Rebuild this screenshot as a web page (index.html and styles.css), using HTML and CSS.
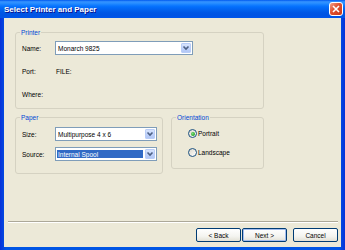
FILE: index.html
```html
<!DOCTYPE html>
<html lang="en">
<head>
    <meta charset="UTF-8">
    <meta name="viewport" content="width=device-width, initial-scale=1.0">
    <title>Select Printer and Paper</title>
    <link rel="stylesheet" href="styles.css">
</head>
<body>
    <div class="window">
        <!-- Title Bar -->
        <div class="titlebar">
            <span class="title">Select Printer and Paper</span>
            <span class="close">
                <svg width="10" height="10" viewBox="0 0 10 10"><path d="M2 2 L8 8 M8 2 L2 8" stroke="#fff" stroke-width="1.6" fill="none"/></svg>
            </span>
        </div>

        <div class="client">
            <!-- Printer -->
            <div class="group printer">
                <span class="group-title">Printer</span>
                <div class="row">
                    <span class="label">Name:</span>
                    <div class="combo combo-wide">
                        <span class="value">Monarch 9825</span>
                        <span class="drop"><svg width="8" height="8" viewBox="0 0 8 8"><path d="M1.5 2.5 L4 5 L6.5 2.5" stroke="#4D6185" stroke-width="1.6" fill="none"/></svg></span>
                    </div>
                </div>
                <div class="row">
                    <span class="label">Port:</span>
                    <span class="info">FILE:</span>
                </div>
                <div class="row">
                    <span class="label">Where:</span>
                </div>
            </div>

            <div class="group-row">
                <!-- Paper -->
                <div class="group paper">
                    <span class="group-title">Paper</span>
                    <div class="row">
                        <span class="label">Size:</span>
                        <div class="combo">
                            <span class="value">Multipurpose 4 x 6</span>
                            <span class="drop"><svg width="8" height="8" viewBox="0 0 8 8"><path d="M1.5 2.5 L4 5 L6.5 2.5" stroke="#4D6185" stroke-width="1.6" fill="none"/></svg></span>
                        </div>
                    </div>
                    <div class="row">
                        <span class="label">Source:</span>
                        <div class="combo">
                            <span class="value selected">Internal Spool</span>
                            <span class="drop"><svg width="8" height="8" viewBox="0 0 8 8"><path d="M1.5 2.5 L4 5 L6.5 2.5" stroke="#4D6185" stroke-width="1.6" fill="none"/></svg></span>
                        </div>
                    </div>
                </div>

                <!-- Orientation -->
                <div class="group orientation">
                    <span class="group-title">Orientation</span>
                    <div class="radio-row">
                        <span class="radio checked"></span>
                        <span>Portrait</span>
                    </div>
                    <div class="radio-row">
                        <span class="radio"></span>
                        <span>Landscape</span>
                    </div>
                </div>
            </div>

            <div class="separator"></div>

            <!-- Buttons -->
            <div class="buttons">
                <button class="btn back">&lt; Back</button>
                <button class="btn default next">Next &gt;</button>
                <button class="btn">Cancel</button>
            </div>
        </div>
    </div>
</body>
</html>
```

FILE: styles.css
```css
* {
    margin: 0;
    padding: 0;
    box-sizing: border-box;
}

body {
    width: 345px;
    height: 250px;
    overflow: hidden;
    font-family: 'Liberation Sans', Arial, sans-serif;
    font-size: 6.5px;
    color: #000;
}

.window {
    width: 345px;
    height: 250px;
    display: flex;
    flex-direction: column;
    background: linear-gradient(to right, #0831D9, #0055E5 6px, #0055E5 calc(100% - 6px), #0831D9);
}

/* Title Bar */
.titlebar {
    height: 18px;
    display: flex;
    align-items: center;
    justify-content: space-between;
    padding: 0 2px 0 4px;
    background: linear-gradient(to bottom, #0058EE 0%, #3593FF 10%, #288EFF 18%, #127DFF 28%, #036FFC 38%, #0262EE 55%, #0057E5 70%, #0054E3 85%, #0055EB 100%);
}

.title {
    color: #fff;
    font-weight: bold;
    font-size: 8px;
    text-shadow: 1px 1px #0F1089;
}

.close {
    width: 14px;
    height: 14px;
    border: 1px solid #fff;
    border-radius: 3px;
    background: linear-gradient(135deg, #F0A08A, #E0502E 45%, #C8381A);
    display: flex;
    align-items: center;
    justify-content: center;
}

/* Client area */
.client {
    flex: 1;
    margin: 0 4px 3px 4px;
    background-color: #ECE9D8;
    display: flex;
    flex-direction: column;
    padding: 14px 0 5px 0;
}

.group {
    position: relative;
    border: 1px solid #D5D2C2;
    border-radius: 3px;
}

.group-title {
    position: absolute;
    top: -5px;
    left: 4px;
    padding: 0 1px;
    line-height: 9px;
    background-color: #ECE9D8;
    color: #0046D5;
}

.printer {
    width: 249px;
    height: 77px;
    margin-left: 11px;
    padding: 8px 0 0 6px;
}

.row {
    display: flex;
    align-items: center;
    height: 14px;
    margin-bottom: 9px;
}

.label {
    width: 33px;
}

.info {
    padding-left: 1px;
}

.group-row {
    display: flex;
    align-items: flex-start;
    gap: 8px;
    margin-top: 8px;
    margin-left: 11px;
}

.paper {
    width: 148px;
    height: 57px;
    padding: 9px 0 0 6px;
}

.paper .row {
    margin-bottom: 6px;
}

.orientation {
    width: 93px;
    height: 52px;
    padding: 11px 0 0 16px;
}

/* Combo boxes */
.combo {
    width: 102px;
    height: 14px;
    border: 1px solid #7F9DB9;
    background-color: #fff;
    display: flex;
    align-items: stretch;
    padding: 1px;
}

.combo-wide {
    width: 138px;
}

.value {
    flex: 1;
    display: flex;
    align-items: center;
    padding-left: 1px;
    margin-right: 1px;
}

.value.selected {
    background-color: #316AC5;
    color: #fff;
    margin: 1px 2px 1px 0;
}

.drop {
    width: 10px;
    border: 1px solid #B9CDF7;
    border-radius: 1px;
    background: linear-gradient(to bottom, #D8E4FC, #C1D3FB 50%, #B2C7F5);
    display: flex;
    align-items: center;
    justify-content: center;
}

/* Radio buttons */
.radio-row {
    display: flex;
    align-items: center;
    gap: 1px;
    height: 9px;
    margin-bottom: 10px;
}

.radio {
    width: 9px;
    height: 9px;
    border: 1px solid #1C5180;
    border-radius: 50%;
    background: linear-gradient(135deg, #DCD8CB, #fff);
    display: flex;
    align-items: center;
    justify-content: center;
}

.radio.checked::after {
    content: '';
    width: 4px;
    height: 4px;
    border-radius: 50%;
    background: radial-gradient(circle at 40% 40%, #7EE07E, #21A121 70%);
}

.separator {
    margin: auto 3px 0 4px;
    height: 2px;
    border-top: 1px solid #ACA899;
    border-bottom: 1px solid #fff;
}

/* Buttons */
.buttons {
    display: flex;
    justify-content: flex-end;
    margin-top: 5px;
    padding-right: 3px;
}

.btn {
    width: 45px;
    height: 14px;
    font-family: 'Liberation Sans', Arial, sans-serif;
    font-size: 6.5px;
    color: #000;
    border: 1px solid #003C74;
    border-radius: 2px;
    background: linear-gradient(to bottom, #fff, #F4F4F0 60%, #E3E1D6);
}

.back {
    margin-right: 1px;
}

.next {
    margin-right: 6px;
}

.btn.default {
    box-shadow: inset 0 0 0 1px #A3BDEF;
}
```
